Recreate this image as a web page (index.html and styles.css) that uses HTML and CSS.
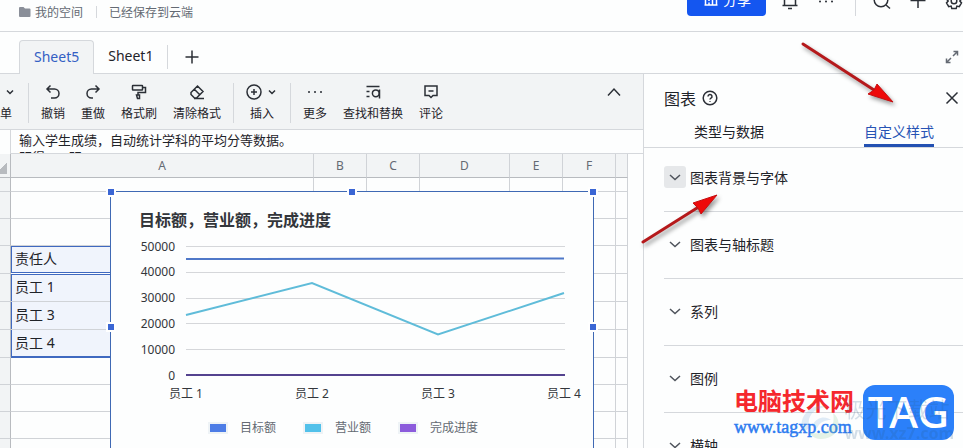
FILE: index.html
```html
<!DOCTYPE html>
<html lang="zh-CN">
<head>
    <meta charset="UTF-8">
    <title>Sheet5</title>
    <link rel="stylesheet" href="styles.css">
</head>
<body>
    <header class="topbar">
        <nav class="crumbs">
            <svg class="folder" width="12" height="10" viewBox="0 0 12 10"><path d="M1 0h3.500l1.500 1.500H10.500a1 1 0 0 1 1 1V9a1 1 0 0 1-1 1H1a1 1 0 0 1-1-1V1a1 1 0 0 1 1-1z" fill="#8a8f99"/></svg>
            <a href="#">我的空间</a>
            <span class="crumb-line"></span>
            <span>已经保存到云端</span>
        </nav>
        <div class="actions">
            <button class="share">
                <svg width="14" height="14" viewBox="0 0 14 14"><path d="M1.500 13V1.500h7V13M8.500 5h4v8M0.500 13h13M4 5h2M4 8h2M5 13v-2.500" /></svg>
                分享
            </button>
            <button class="icon-btn" aria-label="通知"><svg width="20" height="20" viewBox="0 0 20 20"><path d="M4.500 15.500V9a5.500 5.500 0 0 1 11 0v6.500M2.500 15.500h15M8 18.500h4"/></svg></button>
            <button class="icon-btn" aria-label="更多"><svg width="20" height="20" viewBox="0 0 20 20"><path class="dots" d="M4 11.500h.01M10 11.500h.01M16 11.500h.01"/></svg></button>
            <span class="action-line"></span>
            <button class="icon-btn" aria-label="搜索"><svg width="20" height="20" viewBox="0 0 20 20"><circle cx="9" cy="10" r="6.800"/><path d="M14 15l4 3.500"/></svg></button>
            <button class="icon-btn" aria-label="新建"><svg width="20" height="20" viewBox="0 0 20 20"><path d="M10 3v15M2.500 10.500h15"/></svg></button>
            <button class="icon-btn" aria-label="设置"><svg width="20" height="20" viewBox="0 -1 20 20"><path d="M7.800 2.500h4.400l.7 2.400 2.400-.6 2.200 3.800-1.700 1.900 1.700 1.900-2.200 3.800-2.400-.6-.7 2.400H7.800l-.7-2.400-2.400.6-2.200-3.800L4.200 10 2.500 8.100l2.200-3.800 2.400.6z"/><circle cx="10" cy="10" r="2.800"/></svg></button>
        </div>
    </header>

    <div class="tabs">
        <button class="tab active">Sheet5</button>
        <button class="tab">Sheet1</button>
        <span class="tab-line"></span>
        <button class="icon-btn" aria-label="添加工作表"><svg width="16" height="16" viewBox="0 0 16 16"><path d="M8 1.500v13M1.500 8h13"/></svg></button>
        <button class="icon-btn expand" aria-label="展开"><svg width="14" height="14" viewBox="0 0 14 14"><path d="M8.500 1.500h4v4M12.500 1.500L8 6M5.500 12.500h-4v-4M1.500 12.500L6 8"/></svg></button>
    </div>

    <div class="main">
        <div class="workspace">
            <div class="toolbar">
                <button class="tool tool-cut">
                    <svg width="8" height="18" viewBox="0 0 8 18"><path d="M1 7.500l3 3 3-3"/></svg>
                    单
                </button>
                <span class="line"></span>
                <button class="tool">
                    <svg width="18" height="18" viewBox="0 0 18 18"><path d="M6.500 2.500L3 6l3.500 3.500M3 6h7.500a4.500 4.500 0 0 1 0 9H7"/></svg>
                    撤销
                </button>
                <button class="tool">
                    <svg width="18" height="18" viewBox="0 0 18 18"><path d="M11.500 2.500L15 6l-3.500 3.500M15 6H7.500a4.500 4.500 0 0 0 0 9H9"/></svg>
                    重做
                </button>
                <button class="tool">
                    <svg width="18" height="18" viewBox="0 0 18 18"><rect x="2.500" y="2.500" width="10" height="4.500" rx="0.500"/><path d="M12.500 4.500h3v5H8v2.500M6.500 12h3v3.500h-2z"/></svg>
                    格式刷
                </button>
                <button class="tool">
                    <svg width="18" height="18" viewBox="0 0 18 18"><path d="M3 9.500L9.500 3l5.500 5.500L8.500 15H6.500L3 11.500zM6.300 6.300l5.500 5.500M6 15.500h10"/></svg>
                    清除格式
                </button>
                <span class="line"></span>
                <button class="tool">
                    <svg width="32" height="18" viewBox="0 0 32 18"><circle cx="8" cy="9" r="7"/><path d="M8 6v6M5 9h6M23 7.500l3 3 3-3"/></svg>
                    插入
                </button>
                <span class="line"></span>
                <button class="tool">
                    <svg width="18" height="18" viewBox="0 0 18 18"><path class="dots" d="M3 9h.01M9 9h.01M15 9h.01"/></svg>
                    更多
                </button>
                <button class="tool">
                    <svg width="18" height="18" viewBox="0 0 18 18"><path d="M2.500 3.500h13M2.500 8.500h3M2.500 13.500h3M15.500 6.500v9"/><circle cx="11.800" cy="10.300" r="3.400"/></svg>
                    查找和替换
                </button>
                <button class="tool">
                    <svg width="18" height="18" viewBox="0 0 18 18"><path d="M3 3h12v9.500h-4L9 14.500l-2-2H3zM6.500 8h5"/></svg>
                    评论
                </button>
                <button class="icon-btn collapse" aria-label="收起"><svg width="16" height="16" viewBox="0 0 16 16"><path d="M2 11.500L8 5l6 6.500"/></svg></button>
            </div>

            <div class="formula">输入学生成绩，自动统计学科的平均分等数据。<br>明得 4、明</div>

            <div class="sheet">
                <table class="grid">
                    <colgroup>
                        <col class="w-num"><col class="w-a"><col class="w-s"><col class="w-s"><col class="w-d"><col class="w-s"><col class="w-s"><col class="w-g">
                    </colgroup>
                    <thead>
                        <tr><th class="corner"></th><th>A</th><th>B</th><th>C</th><th>D</th><th>E</th><th>F</th><th></th></tr>
                    </thead>
                    <tbody>
                        <tr class="short"><th></th><td></td><td></td><td></td><td></td><td></td><td></td><td></td></tr>
                        <tr><th></th><td></td><td></td><td></td><td></td><td></td><td></td><td></td></tr>
                        <tr><th></th><td></td><td></td><td></td><td></td><td></td><td></td><td></td></tr>
                        <tr class="tall"><th></th><td class="sel sel-head">责任人</td><td></td><td></td><td></td><td></td><td></td><td></td></tr>
                        <tr class="tall"><th></th><td class="sel sel-first">员工 1</td><td></td><td></td><td></td><td></td><td></td><td></td></tr>
                        <tr class="tall"><th></th><td class="sel">员工 3</td><td></td><td></td><td></td><td></td><td></td><td></td></tr>
                        <tr class="tall"><th></th><td class="sel sel-last">员工 4</td><td></td><td></td><td></td><td></td><td></td><td></td></tr>
                        <tr><th></th><td></td><td></td><td></td><td></td><td></td><td></td><td></td></tr>
                        <tr><th></th><td></td><td></td><td></td><td></td><td></td><td></td><td></td></tr>
                        <tr><th></th><td></td><td></td><td></td><td></td><td></td><td></td><td></td></tr>
                        <tr><th></th><td></td><td></td><td></td><td></td><td></td><td></td><td></td></tr>
                    </tbody>
                </table>

                <!-- 浮在表格上的图表 -->
                <div class="chart">
                    <svg width="482" height="270" viewBox="0 0 482 270">
                        <text class="chart-title" x="28" y="34">目标额，营业额，完成进度</text>
                        <path class="rule" d="M75 54.500h379M75 80.500h379M75 106.500h379M75 131.500h379M75 157.500h379M75 183.500h379"/>
                        <g class="y-axis">
                            <text x="64" y="59">50000</text>
                            <text x="64" y="84">40000</text>
                            <text x="64" y="110">30000</text>
                            <text x="64" y="136">20000</text>
                            <text x="64" y="162">10000</text>
                            <text x="64" y="188">0</text>
                        </g>
                        <path d="M75 67L453 66.500" stroke="#4f78c8" stroke-width="2" fill="none"/>
                        <path class="line-cyan" d="M75 123L201 91L327 142.500L453 101"/>
                        <path class="line-purple" d="M75 183h379"/>
                        <g class="x-axis">
                            <text x="75" y="206">员工 1</text>
                            <text x="201" y="206">员工 2</text>
                            <text x="327" y="206">员工 3</text>
                            <text x="453" y="206">员工 4</text>
                        </g>
                    </svg>
                    <div class="legend">
                        <span><i class="swatch blue"></i>目标额</span>
                        <span><i class="swatch cyan"></i>营业额</span>
                        <span><i class="swatch purple"></i>完成进度</span>
                    </div>
                    <i class="handle tl"></i>
                    <i class="handle tc"></i>
                    <i class="handle tr"></i>
                    <i class="handle ml"></i>
                    <i class="handle mr"></i>
                </div>
            </div>
        </div>

        <aside class="panel">
            <div class="panel-head">
                <span class="panel-title">图表</span>
                <svg width="16" height="16" viewBox="0 0 16 16"><circle cx="8" cy="8" r="6.800"/><path d="M6 6.500a2 2 0 1 1 3 1.700c-.7.400-1 .7-1 1.400M8 11v.8"/></svg>
                <button class="icon-btn close" aria-label="关闭"><svg width="14" height="14" viewBox="0 0 14 14"><path d="M1.500 1.500l11 11M12.500 1.500l-11 11"/></svg></button>
            </div>
            <div class="panel-tabs">
                <button>类型与数据</button>
                <button class="on">自定义样式</button>
            </div>
            <div class="sections">
                <button class="section hover"><svg width="22" height="22" viewBox="0 0 22 22"><path d="M6 9l5 4.500L16 9"/></svg>图表背景与字体</button>
                <button class="section"><svg width="22" height="22" viewBox="0 0 22 22"><path d="M6 9l5 4.500L16 9"/></svg>图表与轴标题</button>
                <button class="section"><svg width="22" height="22" viewBox="0 0 22 22"><path d="M6 9l5 4.500L16 9"/></svg>系列</button>
                <button class="section"><svg width="22" height="22" viewBox="0 0 22 22"><path d="M6 9l5 4.500L16 9"/></svg>图例</button>
                <button class="section"><svg width="22" height="22" viewBox="0 0 22 22"><path d="M6 9l5 4.500L16 9"/></svg>横轴</button>
            </div>
        </aside>
    </div>

    <svg class="arrows" width="330" height="220" viewBox="0 0 330 220">
        <g stroke="#b5191b" stroke-width="3" stroke-linecap="round">
            <path d="M170 9L241 55"/>
            <path d="M10 207L64 173"/>
        </g>
        <g fill="#ee0a0a" stroke="#c41012" stroke-width="1">
            <path d="M260 67L235 59L241 55L244 49z"/>
            <path d="M84 160L68 179L65 173L60 168z"/>
        </g>
    </svg>

    <div class="marks">
        <div class="site">
            <strong>电脑技术网</strong>
            <span>www.tagxp.com</span>
        </div>
        <div class="tag">TAG</div>
        <div class="ghost">
            <svg width="42" height="40" viewBox="0 0 42 40"><path d="M2 28C-1 12 14 2 28 6C16 6 7 14 9 24C10 28 6 31 2 28z" fill="#6aa5d8"/><path d="M10 32C28 34 36 26 33 12C44 20 38 38 22 38C16 38 12 36 10 32z" fill="#7fc48c"/><path d="M12 25c5-10 14-10 19-6c-6 0-11 2-14 8z" fill="#6aa5d8"/></svg>
            <p>极光下载站<br><b>www.xz7.com</b></p>
        </div>
    </div>
</body>
</html>
```

FILE: styles.css
```css
* {
    box-sizing: border-box;
}
body {
    margin: 0;
    height: 100vh;
    overflow: hidden;
    position: relative;
    display: flex;
    flex-direction: column;
    background-color: #fdfefe;
    color: #1f2329;
    font-family: "Noto Sans", "Noto Sans CJK SC", sans-serif;
    font-size: 14px;
}
button {
    border: none;
    background: none;
    padding: 0;
    color: inherit;
    font: inherit;
    cursor: pointer;
}
svg {
    display: block;
    flex: none;
    fill: none;
    stroke: #2b2f36;
    stroke-width: 1.5;
}
.icon-btn {
    display: flex;
}
.dots {
    stroke-width: 2;
    stroke-linecap: round;
}

/* 顶栏 */
.topbar {
    height: 32px;
    flex: none;
    overflow: hidden;
    display: flex;
    justify-content: space-between;
    align-items: flex-start;
    border-bottom: 1px solid #d5d8dc;
}
.crumbs {
    display: flex;
    align-items: center;
    height: 24px;
    padding-left: 19px;
    font-size: 12px;
    color: #646a73;
}
.crumbs a {
    color: inherit;
    text-decoration: none;
    margin-left: 4px;
}
.folder {
    stroke: none;
}
.crumb-line {
    width: 1px;
    height: 12px;
    margin: 0 12px 0 13px;
    background-color: #d5d8dc;
}
.actions {
    display: flex;
    align-items: center;
    gap: 16px;
    margin-top: -16px;
    margin-right: -1px;
}
.share {
    display: flex;
    align-items: center;
    gap: 5px;
    height: 32px;
    margin-right: -2px;
    padding: 0 15px 2px 17px;
    border-radius: 4px;
    background-color: #1456f0;
    color: #fff;
}
.share svg {
    stroke: #fff;
}
.action-line {
    width: 1px;
    height: 32px;
    margin-left: 3px;
    background-color: #d5d8dc;
}

/* 工作表标签 */
.tabs {
    height: 42px;
    flex: none;
    display: flex;
    align-items: center;
    padding: 8px 4px 0 19px;
    border-bottom: 1px solid #d5d8dc;
}
.tab {
    height: 34px;
    padding: 0 14px 2px;
    align-self: flex-end;
}
.tab.active {
    margin-bottom: -1px;
    border: 1px solid #d5d8dc;
    border-bottom: none;
    border-radius: 4px 4px 0 0;
    background-color: #f2f4f5;
    color: #3460c4;
}
.tab-line {
    width: 1px;
    height: 24px;
    margin-right: 16px;
    background-color: #d5d8dc;
}
.expand {
    margin-left: auto;
}
.expand svg {
    stroke: #646a73;
}

.main {
    flex: 1;
    min-height: 0;
    display: flex;
}
.workspace {
    flex: 1;
    min-width: 0;
    display: flex;
    flex-direction: column;
}

/* 工具栏 */
.toolbar {
    height: 56px;
    flex: none;
    display: flex;
    align-items: center;
    gap: 16px;
    padding: 2px 21px 0 0;
    border-bottom: 1px solid #d5d8dc;
    background-color: #f2f4f5;
}
.tool {
    display: flex;
    flex-direction: column;
    align-items: center;
    gap: 4px;
    font-size: 12px;
    line-height: 18px;
    white-space: nowrap;
}
.tool-cut {
    width: 16px;
    align-items: flex-start;
}
.tool-cut svg {
    align-self: flex-end;
    margin-right: 2px;
}
.line {
    width: 1px;
    height: 40px;
    margin: 0 -4px;
    background-color: #d5d8dc;
}
.collapse {
    align-self: flex-start;
    margin: 8px 0 0 auto;
}
.formula {
    height: 24px;
    flex: none;
    overflow: hidden;
    margin-left: 10px;
    padding: 2px 8px 0;
    border-left: 1px solid #d5d8dc;
    border-bottom: 1px solid #d5d8dc;
    font-size: 13px;
    line-height: 17px;
}

/* 表格 */
.sheet {
    position: relative;
    flex: 1;
    min-height: 0;
    overflow: hidden;
}
.grid {
    table-layout: fixed;
    width: 628px;
    border-collapse: separate;
    border-spacing: 0;
}
.w-num { width: 11px; }
.w-a { width: 303px; }
.w-s { width: 53px; }
.w-d { width: 90px; }
.w-g { width: 12px; }
.grid th, .grid td {
    height: 27px;
    padding: 0;
    border-right: 1px solid #d0d3d7;
    border-bottom: 1px solid #d0d3d7;
    line-height: 20px;
}
.grid th {
    background-color: #f2f4f5;
    color: #646a73;
    font-size: 12px;
    font-weight: normal;
}
.grid thead th {
    height: 24px;
    border-bottom-color: #b8bbbf;
}
.grid .corner {
    background-image: linear-gradient(135deg, transparent 50%, #b8bbbf 50%);
    background-size: 10px 12px;
    background-position: right 3px bottom 3px;
    background-repeat: no-repeat;
}
.grid tr > th:first-child {
    border-right-color: #b8bbbf;
}
.grid .short th, .grid .short td {
    height: 14px;
}
.grid .tall th, .grid .tall td {
    height: 28px;
}
.grid .sel {
    padding: 0 0 2px 4px;
    background-color: #f0f4fc;
    box-shadow: inset 1px 0 #3f69c0;
}
.grid .sel-head {
    border-bottom-color: #fff;
    box-shadow: inset 0 0 0 1px #3f69c0;
}
.grid .sel-first {
    box-shadow: inset 1px 1px #3f69c0;
}
.grid .sel-last {
    border-bottom-color: #3f69c0;
    box-shadow: inset 1px -1px #3f69c0;
}

/* 图表 */
.chart {
    position: absolute;
    left: 110px;
    top: 37px;
    width: 484px;
    height: 272px;
    border: 1px solid #3f69b4;
    background-color: #fdfefe;
}
.chart text {
    fill: #33363b;
    stroke: none;
    font-size: 12px;
}
.chart .chart-title {
    font-size: 16px;
    font-weight: bold;
}
.rule {
    stroke: #d5d7da;
    stroke-width: 1;
}
.line-cyan {
    stroke: #5fbcd9;
    stroke-width: 2;
}
.line-purple {
    stroke: #54438f;
    stroke-width: 2;
}
.y-axis {
    text-anchor: end;
}
.x-axis {
    text-anchor: middle;
}
.legend {
    position: absolute;
    left: 97px;
    top: 227px;
    display: flex;
    gap: 27px;
    font-size: 12px;
    line-height: 18px;
    color: #646a73;
}
.legend span {
    display: flex;
    align-items: center;
}
.swatch {
    width: 20px;
    height: 12px;
    margin-right: 12px;
    border: 2px solid #eef3f6;
}
.blue { background-color: #4d7de6; }
.cyan { background-color: #52c1ea; }
.purple { background-color: #8c5cdc; }
.handle {
    position: absolute;
    width: 10px;
    height: 10px;
    border: 2px solid #fff;
    background-color: #3a66d4;
}
.tl { left: -5px; top: -5px; }
.tc { left: 236px; top: -5px; }
.tr { right: -5px; top: -5px; }
.ml { left: -5px; top: 130px; }
.mr { right: -5px; top: 130px; }

/* 右侧面板 */
.panel {
    width: 320px;
    flex: none;
    overflow: hidden;
    border-left: 1px solid #d5d8dc;
}
.panel-head {
    display: flex;
    align-items: center;
    gap: 6px;
    height: 48px;
    padding: 0 4px 0 20px;
}
.panel-title {
    font-size: 16px;
}
.close {
    margin-left: auto;
}
.panel-tabs {
    display: flex;
    height: 26px;
    border-bottom: 1px solid #d5d8dc;
}
.panel-tabs button {
    flex: 0 0 170px;
    line-height: 20px;
    padding-bottom: 8px;
}
.panel-tabs .on {
    color: #2753b4;
    background: linear-gradient(#2351b2, #2351b2) center bottom / 70px 3px no-repeat;
}
.sections {
    margin: -3px 0 0 20px;
}
.section {
    display: flex;
    align-items: center;
    gap: 4px;
    width: 100%;
    height: 67px;
    padding-bottom: 2px;
    border-bottom: 1px solid #d5d8dc;
}
.section svg {
    border-radius: 3px;
    stroke: #50555d;
}
.section.hover svg {
    background-color: #e6e8ea;
}

.arrows {
    position: absolute;
    right: 0;
    top: 35px;
    filter: drop-shadow(2px 3px 2px rgba(0,0,0,0.4));
    pointer-events: none;
}

/* 右下角水印 */
.marks {
    position: absolute;
    right: 9px;
    bottom: 8px;
    display: flex;
    align-items: center;
    gap: 8px;
}
.site {
    display: flex;
    flex-direction: column;
    min-width: 121px;
    white-space: nowrap;
}
.site strong {
    font-size: 24px;
    line-height: 28px;
    color: #f5282d;
}
.site span {
    font-family: "Liberation Serif", serif;
    font-size: 18px;
    line-height: 24px;
    color: #2d7bf0;
    -webkit-text-stroke: 0.5px #2d7bf0;
}
.tag {
    width: 91px;
    height: 55px;
    border-radius: 12px;
    background-color: #2b80fa;
    color: #fff;
    font-size: 44px;
    font-weight: 500;
    line-height: 52px;
    text-align: center;
}
.ghost {
    position: absolute;
    right: 0;
    bottom: -4px;
    display: flex;
    align-items: center;
    gap: 2px;
    opacity: 0.2;
}
.ghost svg {
    stroke: none;
}
.ghost p {
    margin: 0;
    color: #2a5f90;
    font-size: 21px;
    line-height: 22px;
}
.ghost b {
    font-size: 16px;
}
```
